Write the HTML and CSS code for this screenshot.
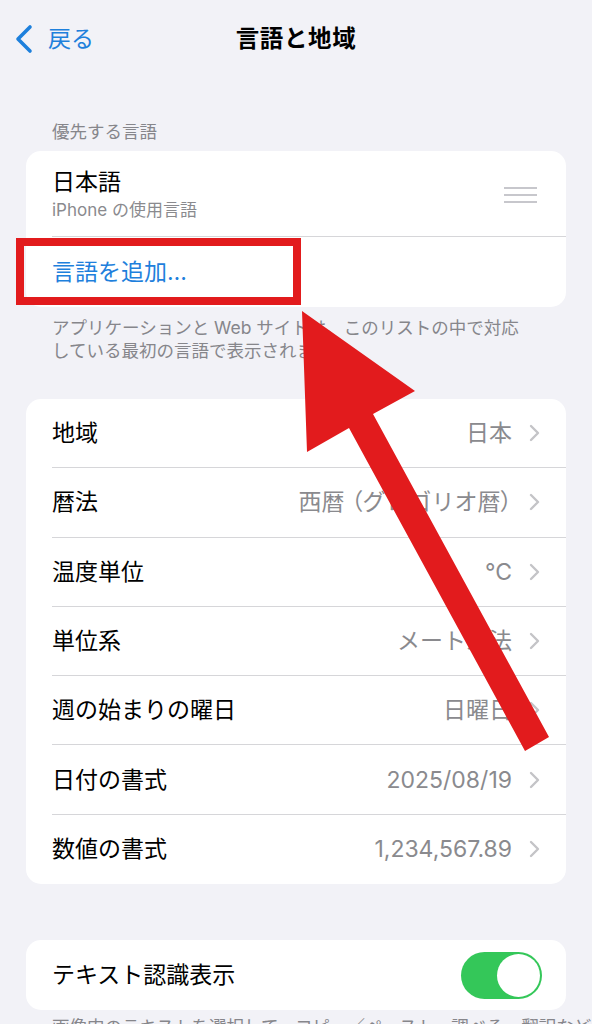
FILE: index.html
```html
<!DOCTYPE html>
<html lang="ja">
<head>
<meta charset="utf-8">
<title>言語と地域</title>
<link rel="stylesheet" href="styles.css">
</head>
<body>
<div class="page">
  <header class="nav">
    <div class="back">
      <svg class="back-chev" width="20" height="30" viewBox="0 0 20 30"><path d="M16 3 L4 15 L16 27" fill="none" stroke="#1e80dc" stroke-width="3.6" stroke-linecap="round" stroke-linejoin="round"/></svg>
      <span class="back-text">戻る</span>
    </div>
    <h1 class="title">言語と地域</h1>
    <div></div>
  </header>

  <div class="section-header">優先する言語</div>
  <div class="card">
    <div class="row row-lang">
      <div class="lang-text">
        <div class="lang-name">日本語</div>
        <div class="lang-sub">iPhone の使用言語</div>
      </div>
      <svg class="handle" width="33" height="18" viewBox="0 0 33 18"><g stroke="#c7c7cc" stroke-width="2"><line x1="0" y1="2" x2="33" y2="2"/><line x1="0" y1="9" x2="33" y2="9"/><line x1="0" y1="16" x2="33" y2="16"/></g></svg>
    </div>
    <div class="row row-add">
      <span class="add-link">言語を追加…</span>
    </div>
  </div>
  <div class="footer">アプリケーションと Web サイトは、このリストの中で対応<br>している最初の言語で表示されます。</div>

  <div class="card card-settings">
    <div class="row setting"><span class="label">地域</span><span class="value">日本</span><svg class="chev" width="11" height="18" viewBox="0 0 11 18"><path d="M2 2 L9 9 L2 16" fill="none" stroke="#c4c4c7" stroke-width="2.4" stroke-linecap="round" stroke-linejoin="round"/></svg></div>
    <div class="row setting"><span class="label">暦法</span><span class="value">西暦 <span class="paren">（</span>グレゴリオ暦<span class="paren">）</span></span><svg class="chev" width="11" height="18" viewBox="0 0 11 18"><path d="M2 2 L9 9 L2 16" fill="none" stroke="#c4c4c7" stroke-width="2.4" stroke-linecap="round" stroke-linejoin="round"/></svg></div>
    <div class="row setting"><span class="label">温度単位</span><span class="value">°C</span><svg class="chev" width="11" height="18" viewBox="0 0 11 18"><path d="M2 2 L9 9 L2 16" fill="none" stroke="#c4c4c7" stroke-width="2.4" stroke-linecap="round" stroke-linejoin="round"/></svg></div>
    <div class="row setting"><span class="label">単位系</span><span class="value">メートル法</span><svg class="chev" width="11" height="18" viewBox="0 0 11 18"><path d="M2 2 L9 9 L2 16" fill="none" stroke="#c4c4c7" stroke-width="2.4" stroke-linecap="round" stroke-linejoin="round"/></svg></div>
    <div class="row setting"><span class="label">週の始まりの曜日</span><span class="value">日曜日</span><svg class="chev" width="11" height="18" viewBox="0 0 11 18"><path d="M2 2 L9 9 L2 16" fill="none" stroke="#c4c4c7" stroke-width="2.4" stroke-linecap="round" stroke-linejoin="round"/></svg></div>
    <div class="row setting"><span class="label">日付の書式</span><span class="value">2025/08/19</span><svg class="chev" width="11" height="18" viewBox="0 0 11 18"><path d="M2 2 L9 9 L2 16" fill="none" stroke="#c4c4c7" stroke-width="2.4" stroke-linecap="round" stroke-linejoin="round"/></svg></div>
    <div class="row setting"><span class="label">数値の書式</span><span class="value">1,234,567.89</span><svg class="chev" width="11" height="18" viewBox="0 0 11 18"><path d="M2 2 L9 9 L2 16" fill="none" stroke="#c4c4c7" stroke-width="2.4" stroke-linecap="round" stroke-linejoin="round"/></svg></div>
  </div>

  <div class="card card-live">
    <div class="row setting"><span class="label">テキスト認識表示</span><span class="toggle"><span class="knob"></span></span></div>
  </div>
  <div class="footer footer-live">画像内のテキストを選択して、コピー／ペースト、調べる、翻訳などを行います。</div>

  <div class="mark-box"></div>
  <svg class="mark-arrow" width="592" height="1024" viewBox="0 0 592 1024"><polygon points="302,311 415,391 373,414 549,737 525,751 349,428 307,452" fill="#e21b1d"/></svg>
</div>
</body>
</html>
```

FILE: styles.css
```css
html, body {
  margin: 0;
  padding: 0;
}
body {
  background: #f2f2f7;
  font-family: "Inter", "Noto Sans CJK JP", sans-serif;
  color: #000;
  width: 592px;
  height: 1024px;
  overflow: hidden;
}
.page {
  position: relative;
  width: 592px;
  height: 1024px;
  overflow: hidden;
}
.nav {
  height: 78px;
  display: grid;
  grid-template-columns: 1fr auto 1fr;
  align-items: center;
}
.back {
  display: flex;
  align-items: center;
  gap: 14px;
  padding-left: 14px;
  padding-bottom: 1px;
}
.back-text {
  color: #1e80dc;
  font-size: 23px;
  line-height: 30px;
}
.title {
  margin: 0;
  font-size: 23.5px;
  font-weight: 700;
  line-height: 30px;
  letter-spacing: 0.6px;
}
.section-header {
  padding: 43px 52px 8px;
  font-size: 17.5px;
  line-height: 22px;
  color: #86868b;
}
.card {
  margin: 0 26px;
  background: #fff;
  border-radius: 15px;
  padding-left: 26px;
}
.row {
  display: flex;
  align-items: center;
  padding-right: 26px;
  border-bottom: 1px solid #d6d6d9;
  box-sizing: border-box;
}
.row:last-child {
  border-bottom: none;
}
.row-lang {
  height: 86px;
  justify-content: space-between;
  padding-right: 29px;
}
.lang-text {
  padding-top: 1px;
}
.lang-name {
  font-size: 23px;
  line-height: 28px;
}
.lang-sub {
  font-size: 17px;
  line-height: 22px;
  color: #8a8a8e;
  margin-top: 3px;
}
.handle {
  display: block;
  margin-top: 2px;
}
.row-add {
  height: 70px;
}
.add-link {
  color: #1e80dc;
  font-size: 23px;
  line-height: 28px;
}
.footer {
  padding: 9px 40px 0 52px;
  font-size: 17.5px;
  line-height: 23px;
  color: #86868b;
}
.card-settings {
  margin-top: 37px;
}
.setting {
  height: 69.3px;
}
.label {
  font-size: 23px;
  line-height: 28px;
  flex: 1;
  white-space: nowrap;
}
.value {
  font-size: 23px;
  line-height: 28px;
  color: #8a8a8e;
  white-space: nowrap;
}
.paren {
  font-feature-settings: "palt";
}
.chev {
  display: block;
  margin-left: 17px;
  flex: none;
}
.card-live {
  margin-top: 56px;
}
.card-live .setting {
  height: 70px;
  padding-right: 24px;
}
.toggle {
  position: relative;
  width: 81px;
  height: 47px;
  border-radius: 24px;
  background: #34c759;
  flex: none;
}
.knob {
  position: absolute;
  right: 2px;
  top: 2px;
  width: 43px;
  height: 43px;
  border-radius: 50%;
  background: #fff;
}
.footer-live {
  padding-top: 5px;
  white-space: nowrap;
}
.mark-box {
  position: absolute;
  left: 16px;
  top: 238px;
  width: 285px;
  height: 67px;
  border: 8px solid #e21b1d;
  box-sizing: border-box;
  pointer-events: none;
}
.mark-arrow {
  position: absolute;
  left: 0;
  top: 0;
  pointer-events: none;
}
```
